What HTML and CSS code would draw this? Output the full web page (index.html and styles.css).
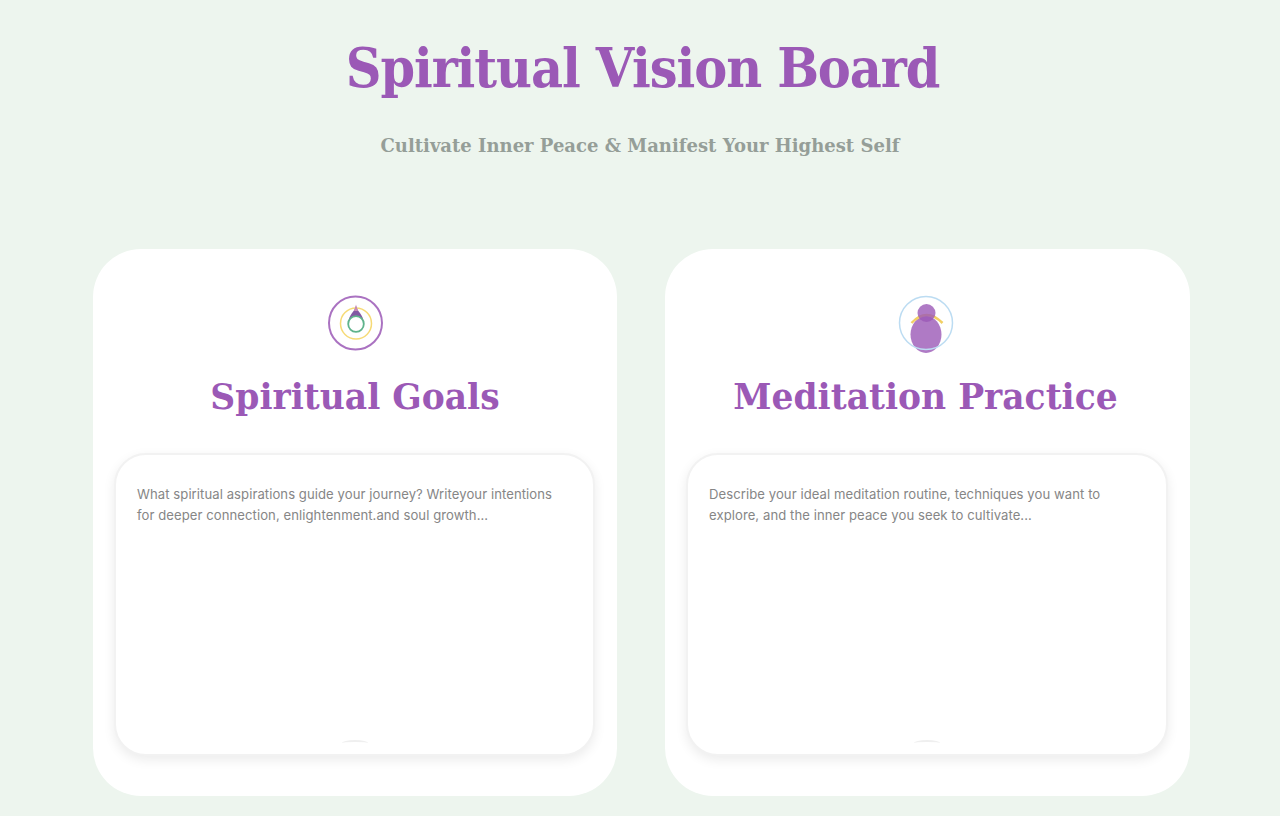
FILE: index.html
```html
<!DOCTYPE html>
<html lang="en">
<head>
<meta charset="utf-8">
<title>Spiritual Vision Board</title>
<link rel="stylesheet" href="styles.css">
</head>
<body>
<header class="header">
  <h1 class="title">Spiritual Vision Board</h1>
  <p class="subtitle">Cultivate Inner Peace &amp; Manifest Your Highest Self</p>
</header>
<main class="board">
  <section class="card">
    <svg class="icon" viewBox="0 0 60 60" width="60" height="60" aria-hidden="true">
      <circle cx="30.500" cy="30" r="26.500" fill="none" stroke="#9b59b6" stroke-width="2" opacity=".85"/>
      <circle cx="31" cy="30.500" r="15.500" fill="none" stroke="#f4d35e" stroke-width="1.500" opacity=".85"/>
      <path d="M31 13 C32 18 38.500 22 38.500 29 L23.500 29 C23.500 22 30 18 31 13 Z" fill="#7b4f9e" opacity=".95"/>
      <path d="M31 11.500 L33 18 L29 18 Z" fill="#c88ab5"/>
      <circle cx="31" cy="31" r="7.800" fill="#fff" stroke="#5fb38c" stroke-width="1.800"/>
    </svg>
    <h2 class="card-title">Spiritual Goals</h2>
    <div class="note">
      <p class="note-text">What spiritual aspirations guide your journey? Writeyour intentions for deeper connection, enlightenment.and soul growth...</p>
      <span class="lift"></span>
    </div>
  </section>
  <section class="card card-shifted">
    <svg class="icon" viewBox="0 0 60 60" width="60" height="60" aria-hidden="true">
      <ellipse cx="30" cy="41.500" rx="15.500" ry="18.500" fill="#9b59b6" opacity=".8"/>
      <path d="M15.500 30 Q30.500 14 46.500 30" fill="none" stroke="#f2cf63" stroke-width="2.500"/>
      <circle cx="30.500" cy="20" r="9" fill="#9b59b6" opacity=".8"/>
      <circle cx="30" cy="30" r="26.500" fill="none" stroke="#bcdcf2" stroke-width="1.500"/>
    </svg>
    <h2 class="card-title">Meditation Practice</h2>
    <div class="note">
      <p class="note-text">Describe your ideal meditation routine, techniques you want to explore, and the inner peace you seek to cultivate...</p>
      <span class="lift"></span>
    </div>
  </section>
</main>
</body>
</html>
```
FILE: styles.css
```css
* { box-sizing: border-box; }
html, body { margin: 0; height: 816px; overflow: hidden; }
body { background: #edf5ee; font-family: "Inter", sans-serif; }
.header { height: 249px; padding-top: 34px; text-align: center; }
.title {
  margin: 0;
  padding-left: 5px;
  font: 700 55px/68px "DejaVu Serif Condensed", "DejaVu Serif", serif;
  letter-spacing: -1.100px;
  color: #9b59b6;
}
.subtitle {
  margin: 32px 0 0;
  font: 700 18px/24px "DejaVu Serif", serif;
  color: #959e98;
}
.board {
  display: grid;
  grid-template-columns: 524px 525px;
  gap: 48px;
  padding-left: 93px;
}
.card {
  height: 547px;
  background: #fff;
  border-radius: 48px;
  padding: 44px 22px 0;
  display: flex;
  flex-direction: column;
  align-items: center;
}
.card-shifted .icon, .card-shifted .card-title { transform: translateX(-2px); }
.icon { display: block; }
.card-title {
  margin: 21px 0 0;
  font: 700 34.500px/46px "DejaVu Serif", serif;
  color: #9b59b6;
}
.note {
  position: relative;
  margin: 33px 0 0 -1px;
  width: calc(100% + 1px);
  height: 303px;
  padding: 29px 28px 29px 21px;
  border: 2px solid #f2f2f2;
  border-radius: 32px;
  box-shadow: 0 4px 12px rgba(0, 0, 0, .08);
  background: #fff;
}
.note-text {
  margin: 0;
  font-size: 13.100px;
  line-height: 21px;
  letter-spacing: .07px;
  color: #868686;
}
.lift {
  position: absolute;
  left: 50%;
  bottom: 8px;
  width: 26px;
  height: 6px;
  margin-left: -13px;
  border-top: 2px solid #efefef;
  border-radius: 50%;
}
```
